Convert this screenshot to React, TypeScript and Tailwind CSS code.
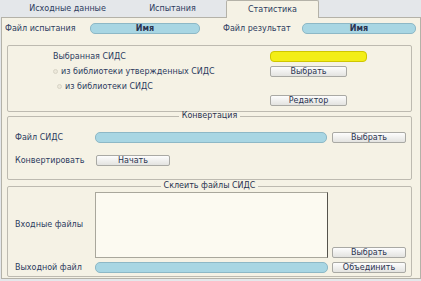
import React from 'react';

const Field = ({ className = '', text = '' }: { className?: string; text?: string }) => (
  <div
    className={`h-[11px] flex items-center justify-center rounded-[5px] border border-[#8db8c6] bg-[#a8d6e3] text-[#2a3350] font-bold ${className}`}
  >
    {text}
  </div>
);

const Btn = ({ label, className = '' }: { label: string; className?: string }) => (
  <button
    className={`h-[11px] w-[74px] flex items-center justify-center rounded-[2px] border border-[#a9a9a4] bg-gradient-to-b from-[#fdfdfd] to-[#e3e3e0] text-[#2a3350] leading-none ${className}`}
  >
    {label}
  </button>
);

const Radio = () => (
  <span className="inline-block w-[5px] h-[5px] rounded-full border border-[#d8d4c6] bg-[#ece8da] mr-[3px]" />
);

const Group = ({ title, children, className = '' }: { title?: string; children: React.ReactNode; className?: string }) => (
  <fieldset className={`border border-[#bdbab0] rounded-[2px] ${className}`}>
    {title && <legend className="mx-auto px-[3px] leading-[8px] text-[#2a3350]">{title}</legend>}
    {children}
  </fieldset>
);

export default function App() {
  return (
    <div className="w-[421px] h-[281px] flex flex-col overflow-hidden bg-[#e4e7ea] font-['DejaVu_Sans',sans-serif] text-[8px] text-[#2c3b5e]">
      {/* Tabs */}
      <div className="h-[17px] flex items-end">
        <div className="ml-[20px] w-[95px] h-[16px] flex items-center justify-center">Исходные данные</div>
        <div className="ml-[25px] w-[65px] h-[16px] flex items-center justify-center">Испытания</div>
        <div className="ml-[21px] w-[93px] h-[18px] -mb-px z-10 flex items-center justify-center rounded-t-[2px] border border-b-0 border-[#b4b2a8] bg-[#f5f2e5]">
          Статистика
        </div>
      </div>

      {/* Main panel */}
      <div className="flex-1 mb-[2px] ml-[1px] border border-[#b4b2a8] bg-[#f5f2e5] flex flex-col">
        <div className="mt-[5px] h-[11px] flex items-center pl-[3px]">
          <span className="w-[85px]">Файл испытания</span>
          <Field className="w-[110px]" text="Имя" />
          <span className="ml-[23px] w-[79px]">Файл результат</span>
          <Field className="w-[114px]" text="Имя" />
        </div>

        <Group className="mt-[11px] ml-[5px] mr-[8px] h-[67px] flex flex-col pt-[5px]">
          <div className="h-[11px] flex items-center">
            <span className="pl-[45px] w-[262px]">Выбранная СИДС</span>
            <div className="w-[97px] h-[11px] rounded-[4px] border border-[#cfc600] bg-[#f3ee17]" />
          </div>
          <div className="mt-[4px] h-[11px] flex items-center">
            <span className="pl-[45px] w-[262px] flex items-center">
              <Radio />
              из библиотеки утвержденных СИДС
            </span>
            <Btn label="Выбрать" className="w-[77px]" />
          </div>
          <div className="mt-[4px] h-[11px] flex items-center">
            <span className="pl-[49px] w-[262px] flex items-center">
              <Radio />
              из библиотеки СИДС
            </span>
          </div>
          <div className="mt-[3px] h-[11px] flex items-center">
            <span className="w-[262px]" />
            <Btn label="Редактор" className="w-[77px]" />
          </div>
        </Group>

        <Group title="Конвертация" className="ml-[5px] mr-[8px] h-[68px]">
          <div className="mt-[12px] h-[11px] flex items-center pl-[7px]">
            <span className="w-[80px]">Файл СИДС</span>
            <Field className="w-[232px]" />
            <Btn label="Выбрать" className="ml-[5px]" />
          </div>
          <div className="mt-[12px] h-[11px] flex items-center pl-[7px]">
            <span className="w-[81px]">Конвертировать</span>
            <Btn label="Начать" />
          </div>
        </Group>

        <Group title="Склеить файлы СИДС" className="mt-[2px] ml-[5px] mr-[8px] h-[95px]">
          <div className="mt-[2px] flex pl-[7px]">
            <span className="w-[80px] self-center">Входные файлы</span>
            <div className="w-[233px] h-[66px] border border-[#a9a79c] border-r-[#55534c] bg-[#fcfaf1]" />
            <Btn label="Выбрать" className="ml-[4px] self-end" />
          </div>
          <div className="mt-[4px] h-[11px] flex items-center pl-[7px]">
            <span className="w-[80px]">Выходной файл</span>
            <Field className="w-[233px]" />
            <Btn label="Объединить" className="ml-[4px]" />
          </div>
        </Group>
      </div>
    </div>
  );
}
